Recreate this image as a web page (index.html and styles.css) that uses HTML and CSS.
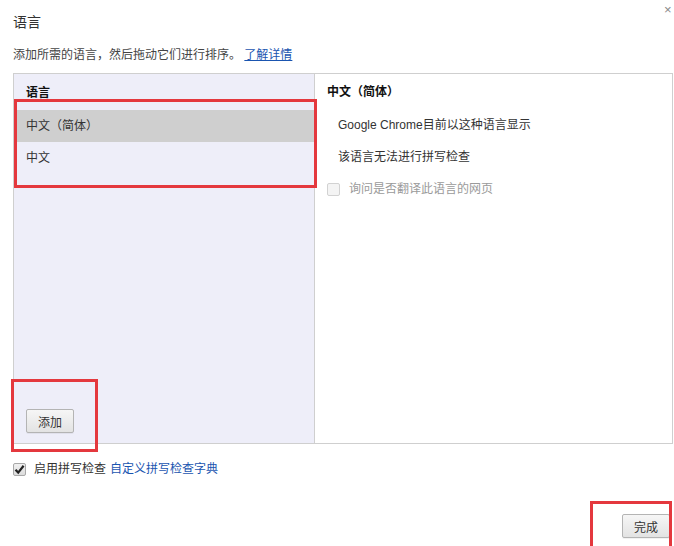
FILE: index.html
```html
<!DOCTYPE html>
<html lang="zh-CN">
<head>
<meta charset="utf-8">
<title>语言</title>
<link rel="stylesheet" href="styles.css">
</head>
<body>
<div class="dialog">
  <div class="title">语言</div>
  <div class="close">×</div>
  <div class="desc">添加所需的语言，然后拖动它们进行排序。 <a class="link" href="#">了解详情</a></div>
  <div class="panel">
    <div class="left">
      <div class="head">语言</div>
      <div class="row selected">中文（简体）</div>
      <div class="row">中文</div>
      <button class="btn add">添加</button>
    </div>
    <div class="right">
      <div class="head">中文（简体）</div>
      <div class="line">Google Chrome目前以这种语言显示</div>
      <div class="line">该语言无法进行拼写检查</div>
      <div class="line check-line"><span class="box disabled"></span><span class="muted">询问是否翻译此语言的网页</span></div>
    </div>
  </div>
  <div class="spell"><span class="box checked"><svg width="11" height="11" viewBox="0 0 11 11"><path d="M1.5 5.8 L4.2 8.6 L9.6 1.8" fill="none" stroke="#222" stroke-width="2.2"/></svg></span><span class="label">启用拼写检查</span><a class="link plain" href="#">自定义拼写检查字典</a></div>
  <div class="footer"><button class="btn done">完成</button></div>
</div>
<div class="mark m1"></div>
<div class="mark m2"></div>
<div class="mark m3"></div>
</body>
</html>
```
FILE: styles.css
```css
html, body {
  margin: 0;
  padding: 0;
}
body {
  width: 674px;
  height: 546px;
  overflow: hidden;
  position: relative;
  background: #fff;
  font-family: "Liberation Sans", "Noto Sans CJK SC", sans-serif;
  font-size: 12px;
  color: #333;
}
.dialog {
  padding-left: 13px;
}
.title {
  margin-top: 12px;
  height: 18px;
  line-height: 18px;
  font-size: 14px;
  color: #333;
  font-family: "Noto Sans CJK SC", sans-serif;
}
.close {
  position: absolute;
  left: 664px;
  top: 2px;
  font-size: 13px;
  color: #888;
}
.desc {
  margin-top: 17px;
  height: 16px;
  line-height: 16px;
  color: #444;
}
.link {
  color: #1a55b0;
  text-decoration: underline;
}
.link.plain {
  text-decoration: none;
}
.panel {
  margin-top: 10px;
  width: 658px;
  height: 369px;
  border: 1px solid #cfcfcf;
  display: flex;
}
.left {
  width: 300px;
  background: #eeeef9;
  border-right: 1px solid #cfcfcf;
  display: flex;
  flex-direction: column;
  padding-top: 9px;
}
.head {
  height: 20px;
  line-height: 20px;
  font-weight: bold;
  color: #111;
  padding-left: 12px;
  margin-bottom: 7px;
}
.row {
  height: 32px;
  line-height: 32px;
  padding-left: 12px;
  color: #333;
}
.row.selected {
  background: #cfcfcf;
}
.btn {
  font-family: "Liberation Sans", "Noto Sans CJK SC", sans-serif;
  font-size: 12px;
  color: #333;
  width: 48px;
  height: 24px;
  padding: 0;
  border: 1px solid #b4b4b4;
  border-radius: 2px;
  background: linear-gradient(#f6f6f6, #e3e3e3);
  box-shadow: 0 1px 0 rgba(0,0,0,0.05);
}
.add {
  margin-top: auto;
  margin-left: 12px;
  margin-bottom: 10px;
}
.right {
  flex: 1;
  padding-top: 8px;
  padding-left: 12px;
}
.right .head {
  padding-left: 0;
}
.line {
  height: 32px;
  line-height: 32px;
  padding-left: 11px;
  color: #333;
}
.check-line {
  padding-left: 0;
  display: flex;
  align-items: center;
}
.box {
  width: 11px;
  height: 11px;
  border: 1px solid #b8b8b8;
  border-radius: 2px;
  display: inline-flex;
  align-items: center;
  justify-content: center;
  flex: none;
}
.box.disabled {
  background: #f4f4f4;
  border-color: #d2d2d2;
  margin-right: 9px;
}
.muted {
  color: #9a9a9a;
}
.spell {
  margin-top: 15px;
  height: 20px;
  line-height: 20px;
  display: flex;
  align-items: center;
}
.box.checked {
  background: linear-gradient(#f0f0f0, #dcdcdc);
  border-color: #a8a8a8;
  margin-right: 8px;
}
.label {
  color: #333;
  margin-right: 4px;
}
.footer {
  margin-top: 35px;
  display: flex;
  justify-content: flex-end;
  padding-right: 4px;
}
.mark {
  position: absolute;
  border: 3px solid #e4383e;
  box-sizing: border-box;
}
.m1 { left: 14px; top: 99px; width: 303px; height: 89px; }
.m2 { left: 11px; top: 379px; width: 87px; height: 73px; }
.m3 { left: 590px; top: 501px; width: 82px; height: 52px; }
```
